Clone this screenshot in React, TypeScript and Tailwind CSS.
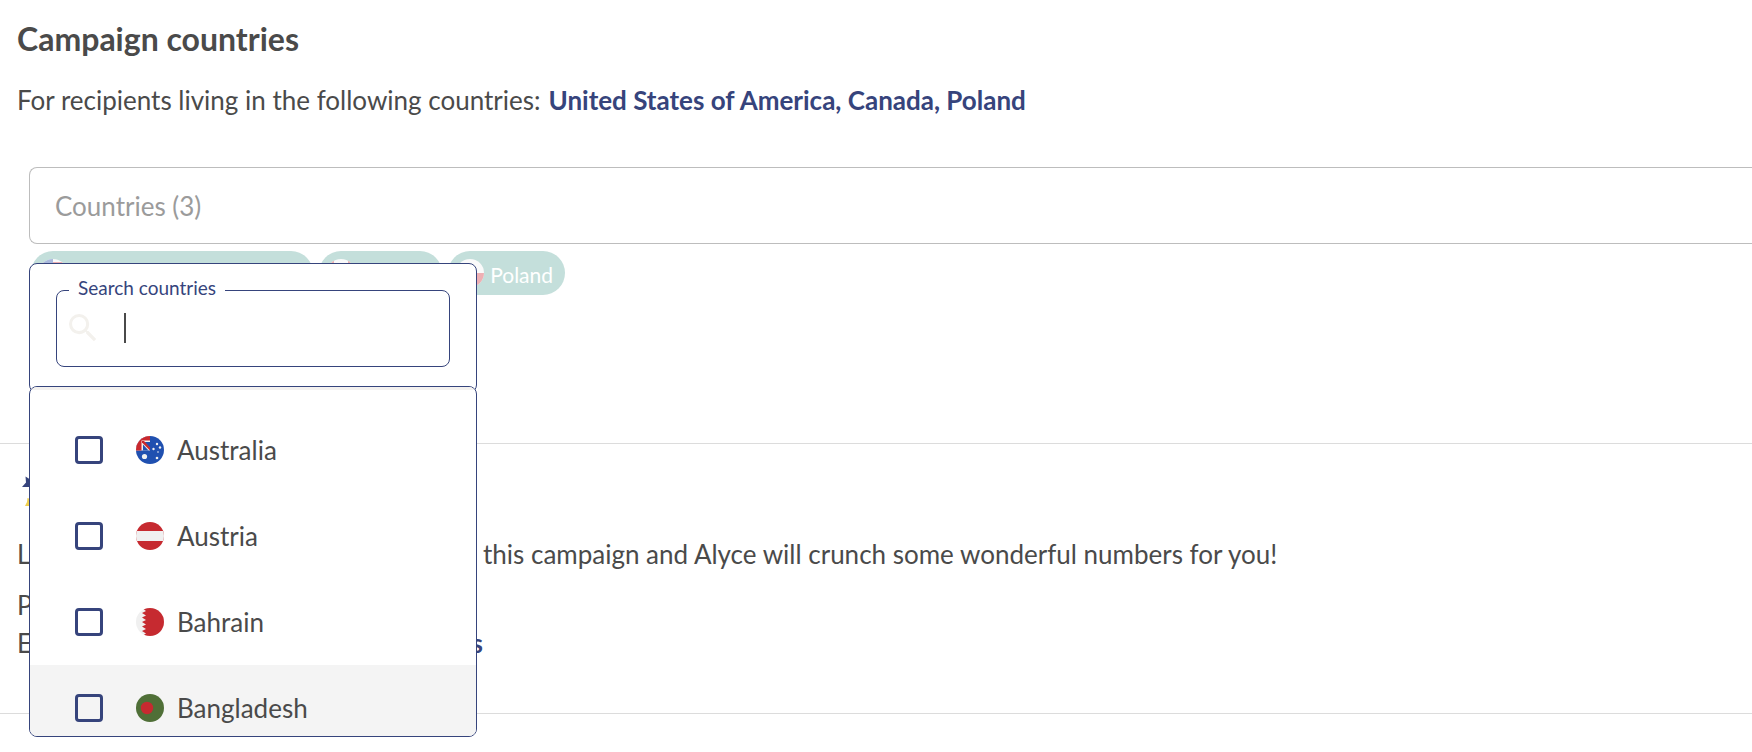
import React, { useState } from 'react'

type Country = {
  name: string
  flag: React.ReactNode
}

function Flag({ id, children }: { id: string; children: React.ReactNode }) {
  return (
    <svg viewBox="0 0 28 28" className="h-7 w-7 shrink-0" aria-hidden="true">
      <clipPath id={id}>
        <circle cx="14" cy="14" r="14" />
      </clipPath>
      <g clipPath={`url(#${id})`}>{children}</g>
    </svg>
  )
}

const countries: Country[] = [
  {
    name: 'Australia',
    flag: (
      <Flag id="flag-au">
        <rect width="28" height="28" fill="#2050b0" />
        <rect width="14" height="14.5" fill="#f0f0f0" />
        <path d="M0 0h14v4.500H5.500v10H0z" fill="#c9282d" />
        <path d="M14 7.500V12L8.500 6H14zM7 8.500l5.500 6H7z" fill="#2050b0" />
        <path d="M6 5h2l6 6.500v3L6 6.500z" fill="#c9282d" />
        <circle cx="8.5" cy="20.5" r="2.6" fill="#f0f0f0" />
        <circle cx="21" cy="8" r="1.2" fill="#f0f0f0" />
        <circle cx="17.5" cy="13" r="1.2" fill="#f0f0f0" />
        <circle cx="24" cy="11.5" r="1.2" fill="#f0f0f0" />
        <circle cx="22" cy="16" r="0.8" fill="#f0f0f0" />
        <circle cx="21" cy="22" r="1.3" fill="#f0f0f0" />
      </Flag>
    ),
  },
  {
    name: 'Austria',
    flag: (
      <Flag id="flag-at">
        <rect width="28" height="28" fill="#c62a30" />
        <rect y="9" width="28" height="10" fill="#f0f0f0" />
      </Flag>
    ),
  },
  {
    name: 'Bahrain',
    flag: (
      <Flag id="flag-bh">
        <rect width="28" height="28" fill="#f0f0f0" />
        <path d="M28 0H6l4 3-4 2 4 2.500-4 2 4 2.500-4 2 4 2.500-4 2 4 2.500-4 2 4 2.500-4 2.500h22z" fill="#c62a30" />
      </Flag>
    ),
  },
  {
    name: 'Bangladesh',
    flag: (
      <Flag id="flag-bd">
        <rect width="28" height="28" fill="#4f6f37" />
        <circle cx="11" cy="14" r="6.2" fill="#c62a30" />
      </Flag>
    ),
  },
]

const selected: Country[] = [
  {
    name: 'United States of America',
    flag: (
      <Flag id="flag-us">
        <rect width="28" height="28" fill="#fafafa" />
        <path d="M0 3h28v4H0zM0 11h28v4H0zM0 19h28v4H0z" fill="#eeb0b4" />
        <rect width="14" height="14" fill="#a9b9dc" />
      </Flag>
    ),
  },
  {
    name: 'Canada',
    flag: (
      <Flag id="flag-ca">
        <rect width="28" height="28" fill="#fafafa" />
        <path d="M0 0h7v28H0zM21 0h7v28h-7z" fill="#eeb0b4" />
      </Flag>
    ),
  },
  {
    name: 'Poland',
    flag: (
      <Flag id="flag-pl">
        <rect width="28" height="28" fill="#fafafa" />
        <rect y="14" width="28" height="14" fill="#eeb0b4" />
      </Flag>
    ),
  },
]

function CountryDropdown() {
  const [search, setSearch] = useState('')

  return (
    <div className="absolute left-0 top-24 z-10 w-[448px]">
      <div className="h-[130px] rounded-lg border border-[#36447c] bg-white px-[26px] pt-3">
        <fieldset className="h-[91px] min-w-0 rounded-lg border border-[#36447c] px-3">
          <legend className="px-[9px] pb-1 text-[19px] leading-6 text-[#36447c]">
            <label htmlFor="search-countries">Search countries</label>
          </legend>
          <div className="relative flex h-12 items-center">
            <svg viewBox="3 3 18 18" className="h-7 w-7 shrink-0" fill="#f3f1ed" aria-hidden="true">
              <path d="M15.500 14h-.79l-.28-.27A6.470 6.470 0 0 0 16 9.500 6.500 6.500 0 1 0 9.500 16c1.610 0 3.090-.59 4.230-1.570l.27.28v.79l5 4.990L20.490 19l-4.990-5zm-6 0C7.010 14 5 11.990 5 9.500S7.010 5 9.500 5 14 7.010 14 9.500 11.990 14 9.500 14z" />
            </svg>
            {!search && <span className="absolute left-[55px] h-[30px] w-0.5 bg-[#4a4a4a]" />}
            <input
              id="search-countries"
              type="text"
              value={search}
              onChange={(e) => setSearch(e.target.value)}
              className="ml-7 min-w-0 flex-1 bg-transparent text-[26px] text-[#4a4a4a] outline-none"
            />
          </div>
        </fieldset>
      </div>

      <ul className="-mt-[7px] h-[351px] overflow-hidden rounded-lg border border-[#36447c] bg-white">
        <li className="h-5 border-t-[3px] border-[#f3f1ef]" aria-hidden="true" />
        {countries.map((country) => (
          <li key={country.name} className="last:bg-[#f4f4f4]">
            <label className="flex h-[86px] items-center pl-[45px] text-[26px] text-[#4a4a4a]">
              <input
                type="checkbox"
                className="h-7 w-7 shrink-0 appearance-none rounded border-[3px] border-[#36447c] checked:bg-[#36447c]"
              />
              <span className="ml-[33px] mr-[13px]">{country.flag}</span>
              {country.name}
            </label>
          </li>
        ))}
      </ul>
    </div>
  )
}

export default function App() {
  return (
    <main className="overflow-x-hidden bg-white pb-[38px] font-['Lato',sans-serif] text-[26px] leading-[38px] text-[#4a4a4a]">
      <section className="border-b border-[#dcdcdc]">
        <h1 className="px-[17px] pt-5 text-[32px] font-bold">Campaign countries</h1>
        <p className="mt-[23px] px-[17px]">
          For recipients living in the following countries:
          <strong className="ml-2 font-bold text-[#36447c]">{selected.map((c) => c.name).join(', ')}</strong>
        </p>

        <div className="relative ml-[29px] mt-12 h-[276px]">
          <button
            type="button"
            className="flex h-[77px] w-full items-center rounded-l-lg border border-r-0 border-[#bdbdbd] pl-[25px] text-[#9b9b9b]"
          >
            Countries (3)
          </button>
          <div className="mt-[7px] flex gap-1.5 pl-0.5">
            {selected.map((country) => (
              <span
                key={country.name}
                className="flex h-11 items-center gap-1.5 rounded-full bg-[#c4dfdb] pl-2 pr-3 text-[21px] text-white"
              >
                {country.flag}
                <span className="pt-1">{country.name}</span>
              </span>
            ))}
          </div>
          <CountryDropdown />
        </div>
      </section>

      <section className="h-[270px] border-b border-[#dcdcdc] px-[17px] pt-7">
        <svg viewBox="0 0 40 40" className="ml-1 h-10 w-10" aria-hidden="true">
          <path d="M1 15l4-4.500-.5-6L10 8l6-3-2 7 5 5-9-2z" fill="#36447c" />
          <path d="M4 34l2-4 .5-4 5.500 2 6-1-3 4 3 5-8-2z" fill="#f0d04f" />
        </svg>
        {/* The first column sits under the open dropdown */}
        <div className="mt-[23px] flex whitespace-nowrap">
          <span className="w-[466px] shrink-0">L</span>
          <span>this campaign and Alyce will crunch some wonderful numbers for you!</span>
        </div>
        <p className="mt-[13px]">P</p>
        <p className="flex w-[466px] justify-between">
          E <strong className="font-bold text-[#36447c]">s</strong>
        </p>
      </section>
    </main>
  )
}
